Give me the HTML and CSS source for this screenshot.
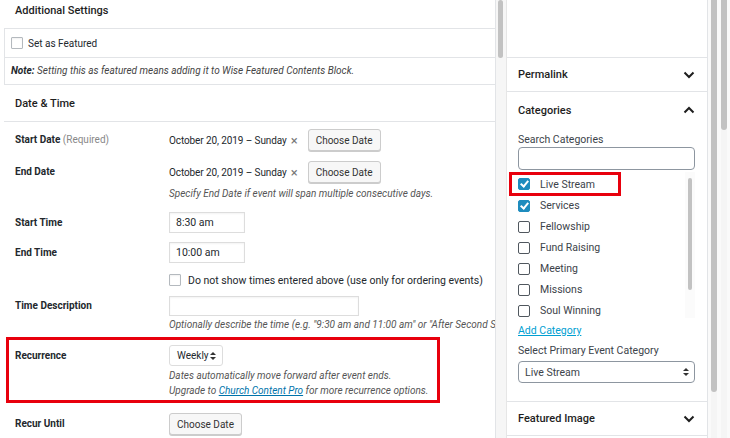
FILE: index.html
```html
<!DOCTYPE html>
<html lang="en">
<head>
    <meta charset="UTF-8">
    <meta name="viewport" content="width=device-width, initial-scale=1.0">
    <title>Edit Event</title>
    <link rel="stylesheet" href="styles.css">
</head>
<body>
    <div class="main">
        <div class="metabox">
            <div class="metabox-title">Additional Settings</div>
            <div class="featured-box">
                <label class="featured-row"><span class="checkbox"></span>Set as Featured</label>
                <div class="note"><b>Note:</b> Setting this as featured means adding it to Wise Featured Contents Block.</div>
            </div>
        </div>

        <div class="metabox">
            <div class="metabox-title section-title">Date &amp; Time</div>

            <div class="field date-start">
                <div class="label">Start Date <span class="req">(Required)</span></div>
                <div class="value">
                    <div class="date-line">
                        <span class="date-text">October 20, 2019 – Sunday</span>
                        <span class="clear">×</span>
                        <button class="btn">Choose Date</button>
                    </div>
                </div>
            </div>

            <div class="field date-end">
                <div class="label">End Date</div>
                <div class="value">
                    <div class="date-line">
                        <span class="date-text">October 20, 2019 – Sunday</span>
                        <span class="clear">×</span>
                        <button class="btn">Choose Date</button>
                    </div>
                    <p class="hint">Specify End Date if event will span multiple consecutive days.</p>
                </div>
            </div>

            <div class="field time-start">
                <div class="label">Start Time</div>
                <div class="value"><input class="text time" type="text" value="8:30 am"></div>
            </div>

            <div class="field time-end">
                <div class="label">End Time</div>
                <div class="value">
                    <input class="text time" type="text" value="10:00 am">
                    <label class="check-line"><span class="checkbox"></span>Do not show times entered above (use only for ordering events)</label>
                </div>
            </div>

            <div class="field time-desc">
                <div class="label">Time Description</div>
                <div class="value">
                    <input class="text desc" type="text" value="">
                    <p class="hint nowrap">Optionally describe the time (e.g. "9:30 am and 11:00 am" or "After Second Service")</p>
                </div>
            </div>

            <div class="field recurrence highlight">
                <div class="label">Recurrence</div>
                <div class="value">
                    <div class="select small">Weekly <span class="arrows"><i class="up"></i><i class="down"></i></span></div>
                    <p class="hint">Dates automatically move forward after event ends.<br>Upgrade to <a href="#">Church Content Pro</a> for more recurrence options.</p>
                </div>
            </div>

            <div class="field recur-until">
                <div class="label">Recur Until</div>
                <div class="value"><button class="btn">Choose Date</button></div>
            </div>
        </div>
    </div>

    <div class="scroll main-scroll"><div class="thumb" style="height:58px"></div></div>

    <div class="sidebar">
        <div class="panel blank"></div>
        <div class="panel">
            <div class="panel-head">Permalink
                <svg width="12" height="8" viewBox="0 0 12 8"><polyline points="1.5,1.5 6,6 10.5,1.5" fill="none" stroke="#1e1e1e" stroke-width="2"/></svg>
            </div>
        </div>
        <div class="panel">
            <div class="panel-head tall">Categories
                <svg width="12" height="8" viewBox="0 0 12 8"><polyline points="1.5,6.5 6,2 10.5,6.5" fill="none" stroke="#1e1e1e" stroke-width="2"/></svg>
            </div>
            <div class="panel-body">
                <div class="small-label">Search Categories</div>
                <input class="search" type="text">
                <div class="checklist-wrap">
                    <ul class="checklist">
                        <li class="picked"><span class="cb on"></span>Live Stream</li>
                        <li><span class="cb on"></span>Services</li>
                        <li><span class="cb"></span>Fellowship</li>
                        <li><span class="cb"></span>Fund Raising</li>
                        <li><span class="cb"></span>Meeting</li>
                        <li><span class="cb"></span>Missions</li>
                        <li><span class="cb"></span>Soul Winning</li>
                    </ul>
                    <div class="list-scroll"><div class="thumb" style="height:112px"></div></div>
                </div>
                <a class="add-cat" href="#">Add Category</a>
                <div class="small-label primary">Select Primary Event Category</div>
                <div class="select wide">Live Stream <span class="arrows"><i class="up"></i><i class="down"></i></span></div>
            </div>
        </div>
        <div class="panel">
            <div class="panel-head">Featured Image
                <svg width="12" height="8" viewBox="0 0 12 8"><polyline points="1.5,1.5 6,6 10.5,1.5" fill="none" stroke="#1e1e1e" stroke-width="2"/></svg>
            </div>
        </div>
    </div>

    <div class="outer-scrolls">
        <div class="scroll slim"><div class="thumb" style="height:392px"></div></div>
        <div class="scroll slim"><div class="thumb" style="height:130px"></div></div>
    </div>
</body>
</html>
```

FILE: styles.css
```css
* {
    margin: 0;
    padding: 0;
    box-sizing: border-box;
}

body {
    display: flex;
    width: 730px;
    height: 438px;
    overflow: hidden;
    background-color: #f3f3f4;
    color: #23282d;
    font-family: 'Roboto', 'Liberation Sans', sans-serif;
    font-size: 10px;
}

/* main editor column */
.main {
    flex-shrink: 0;
    width: 496px;
    padding-left: 4px;
    background-color: #fff;
    border-right: 1px solid #e2e4e7;
    overflow: hidden;
}

.metabox-title {
    height: 28px;
    padding: 0 11px;
    line-height: 21px;
    font-size: 11px;
    font-weight: 500;
    color: #1e1e1e;
}

.featured-box {
    border: 1px solid #e2e4e7;
    border-right: none;
}

.featured-row {
    display: flex;
    align-items: center;
    height: 29px;
    padding-left: 6px;
    border-bottom: 1px solid #e2e4e7;
}

.checkbox {
    flex-shrink: 0;
    width: 12px;
    height: 12px;
    margin-right: 5px;
    border: 1px solid #b4b9be;
    border-radius: 1px;
    background-color: #fff;
    box-shadow: inset 0 1px 2px rgba(0, 0, 0, 0.06);
}

.note {
    height: 26px;
    padding-left: 6px;
    line-height: 26px;
    font-size: 10px;
    font-style: italic;
    color: #444;
    white-space: nowrap;
}

.note b {
    color: #23282d;
}

.section-title {
    height: 37px;
    line-height: 38px;
    border-bottom: 1px solid #e2e4e7;
}

.field {
    display: flex;
    margin-top: 7px;
}

.field .label {
    flex-shrink: 0;
    width: 165px;
    padding-left: 11px;
    font-weight: 700;
    line-height: 22px;
}

.req {
    font-weight: 400;
    color: #888;
}

.value {
    flex: 1;
    min-width: 0;
}

.date-line {
    display: flex;
    align-items: center;
    height: 22px;
}

.date-text {
    white-space: nowrap;
    letter-spacing: -0.1px;
}

.clear {
    margin: 0 10px 0 4px;
    font-size: 13px;
    color: #777;
}

.btn {
    height: 22px;
    padding: 0 7px;
    font-family: inherit;
    font-size: 10px;
    color: #333;
    background-color: #f7f7f7;
    border: 1px solid #ccc;
    border-radius: 3px;
    box-shadow: 0 1px 0 #ccc;
}

.hint {
    margin-top: 3px;
    line-height: 15px;
    font-size: 10px;
    font-style: italic;
    color: #555;
}

.nowrap {
    white-space: nowrap;
}

.date-end {
    margin-top: 10px;
}

.time-start {
    margin-top: 11px;
}

.text {
    display: block;
    height: 21px;
    padding: 0 6px;
    font-family: inherit;
    font-size: 10.5px;
    color: #23282d;
    border: 1px solid #ddd;
    box-shadow: inset 0 1px 2px rgba(0, 0, 0, 0.05);
}

.time {
    width: 76px;
}

.field.time-start .label,
.field.time-end .label {
    line-height: 21px;
}

.time-end {
    margin-top: 9px;
}

.check-line {
    display: flex;
    align-items: center;
    height: 14px;
    margin-top: 10px;
    font-size: 10.5px;
    white-space: nowrap;
}

.check-line .checkbox {
    margin-right: 7px;
}

.time-desc {
    margin-top: 9px;
}

.desc {
    width: 190px;
    height: 20px;
}

.field.time-desc .label {
    line-height: 20px;
}

.hint.nowrap {
    margin-top: 2px;
    line-height: 14px;
}

.highlight {
    width: 434px;
    margin: 5px 0 0 2px;
    padding: 5px 0 2px 0;
    border: 3px solid #e8000d;
}

.highlight .label {
    width: 160px;
    padding-left: 6px;
}

.select {
    display: flex;
    align-items: center;
    justify-content: space-between;
    height: 21px;
    font-size: 10.5px;
    background-color: #fff;
    border: 1px solid #ddd;
    border-radius: 3px;
}

.select.small {
    width: 54px;
    padding: 0 6px 0 7px;
    font-size: 10px;
}

.arrows {
    display: flex;
    flex-direction: column;
    gap: 2px;
}

.arrows i {
    width: 0;
    height: 0;
    border-left: 3px solid transparent;
    border-right: 3px solid transparent;
}

.arrows .up {
    border-bottom: 3px solid #333;
}

.arrows .down {
    border-top: 3px solid #333;
}

.highlight .hint {
    margin-top: 2px;
}

.hint a {
    color: #0073aa;
}

.recur-until {
    margin-top: 10px;
}

/* scrollbars */
.scroll {
    flex-shrink: 0;
    background-color: #f6f6f6;
}

.thumb {
    background-color: #c2c2c2;
    border-radius: 3px;
}

.main-scroll {
    width: 11px;
    padding: 0 3px 0 2px;
    border-right: 1px solid #e6e6e6;
}

/* sidebar */
.sidebar {
    flex-shrink: 0;
    width: 201px;
    background-color: #fff;
    border-right: 1px solid #e2e4e7;
    font-size: 10.5px;
}

.panel {
    border-bottom: 1px solid #e2e4e7;
}

.blank {
    height: 58px;
}

.panel-head {
    display: flex;
    align-items: center;
    justify-content: space-between;
    height: 33px;
    padding: 0 12px 0 11px;
    font-size: 11px;
    font-weight: 500;
    color: #1e1e1e;
}

.panel-head.tall {
    height: 36px;
}

.panel-body {
    margin-top: -1px;
    padding: 0 12px 18px 11px;
}

.small-label {
    line-height: 14px;
    margin-top: 6px;
    color: #3c434a;
}

.search {
    display: block;
    width: 100%;
    height: 23px;
    border: 1px solid #8d96a0;
    border-radius: 4px;
}

.checklist-wrap {
    display: flex;
    height: 146px;
    margin: 2px 0 0 -10px;
    padding-left: 10px;
    overflow: hidden;
}

.checklist {
    flex: 1;
    list-style: none;
}

.checklist li {
    display: flex;
    align-items: center;
    height: 21px;
    color: #3c434a;
}

.checklist li.picked {
    width: 112px;
    height: 24px;
    margin: 0 0 -1px -9px;
    padding-left: 6px;
    border: 3px solid #e8000d;
}

.cb {
    position: relative;
    flex-shrink: 0;
    width: 12px;
    height: 12px;
    margin-right: 10px;
    border: 1.5px solid #50575e;
    border-radius: 2px;
    background-color: #fff;
}

.cb.on {
    border-color: #1e8cbe;
    background-color: #1e8cbe;
}

.cb.on::after {
    content: "";
    position: absolute;
    left: 3px;
    top: 0;
    width: 3px;
    height: 6px;
    border: solid #fff;
    border-width: 0 2px 2px 0;
    transform: rotate(40deg);
}

.list-scroll {
    width: 10px;
    padding: 6px 3px 0 3px;
    background-color: #fbfbfb;
}

.add-cat {
    display: block;
    margin-top: 6px;
    color: #00a0d2;
}

.primary {
    margin-top: 7px;
}

.select.wide {
    width: 100%;
    height: 22px;
    margin-top: 3px;
    padding: 0 5px 0 6px;
    border-color: #8d96a0;
    border-radius: 4px;
    color: #3c434a;
}

/* right edge scrollbars */
.outer-scrolls {
    display: flex;
    flex: 1;
    gap: 4px;
    padding-left: 3px;
    background-color: #fafafa;
}

.slim {
    width: 6px;
    background-color: #f5f5f5;
}

.slim .thumb {
    border-radius: 0 0 3px 3px;
}
```
